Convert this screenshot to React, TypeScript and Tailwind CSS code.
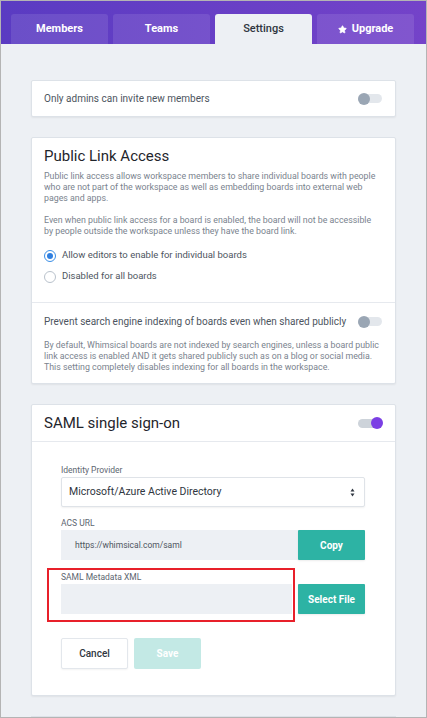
import { Star } from "lucide-react";

function Toggle({ on }: { on?: boolean }) {
	return (
		<div className={`relative h-[9px] w-[24px] rounded-full ${on ? "bg-[#cdd3da]" : "bg-[#e3e7ec]"}`}>
			<div
				className={`absolute top-1/2 h-[12px] w-[12px] -translate-y-1/2 rounded-full ${
					on ? "right-[-1px] bg-[#7b3fe4]" : "left-0 bg-[#9aa6b4]"
				}`}
			/>
		</div>
	);
}

function Radio({ checked, label }: { checked?: boolean; label: string }) {
	return (
		<div className="flex h-[15px] items-center gap-[6px]">
			<div
				className={`flex h-[12px] w-[12px] items-center justify-center rounded-full border ${
					checked ? "border-[#3a8ee6]" : "border-[#b9c2cc]"
				} bg-white`}
			>
				{checked && <div className="h-[6px] w-[6px] rounded-full bg-[#2f7fe0]" />}
			</div>
			<span className="text-[9.5px] text-[#4d5560]">{label}</span>
		</div>
	);
}

export default function App() {
	return (
		<div
			className="flex h-[718px] w-[427px] flex-col overflow-hidden border border-[#b4b4b4] bg-[#edf0f4]"
			style={{ fontFamily: "Roboto, 'Liberation Sans', sans-serif" }}
		>
			{/* Tabs header */}
			<div className="flex h-[43px] shrink-0 items-end gap-[5px] bg-gradient-to-r from-[#5a3bc2] to-[#7443c9] px-[10px]">
				<div className="flex h-[30px] w-[97px] items-center justify-center rounded-t-[3px] bg-white/10 text-[11px] font-bold text-white">
					Members
				</div>
				<div className="flex h-[30px] w-[97px] items-center justify-center rounded-t-[3px] bg-white/10 text-[11px] font-bold text-white">
					Teams
				</div>
				<div className="flex h-[30px] w-[97px] items-center justify-center rounded-t-[3px] bg-[#edf0f4] text-[11px] font-medium text-[#2f3640]">
					Settings
				</div>
				<div className="flex h-[30px] w-[97px] items-center justify-center gap-[5px] rounded-t-[3px] bg-white/10 text-[11px] font-bold text-white">
					<Star className="h-[9px] w-[9px]" fill="white" strokeWidth={2} />
					Upgrade
				</div>
			</div>

			<div className="flex flex-col gap-[20px] px-[30px] pt-[36px]">
				{/* Invite card */}
				<div className="flex h-[37px] items-center justify-between rounded-[2px] border border-[#dde2e8] bg-white pl-[12px] pr-[13px] shadow-[0_1px_2px_rgba(0,0,0,0.06)]">
					<span className="text-[10px] text-[#4d5560]">Only admins can invite new members</span>
					<Toggle />
				</div>

				{/* Public link access */}
				<div className="rounded-[2px] border border-[#dde2e8] bg-white shadow-[0_1px_2px_rgba(0,0,0,0.06)]">
					<div className="px-[12px] pb-[18px] pt-[8px]">
						<div className="text-[15px] leading-[20px] text-[#1f252c]">Public Link Access</div>
						<p className="mt-[5px] whitespace-nowrap text-[8.8px] leading-[11px] text-[#7a838e]">
							Public link access allows workspace members to share individual boards with people
							<br />
							who are not part of the workspace as well as embedding boards into external web
							<br />
							pages and apps.
						</p>
						<p className="mt-[11px] whitespace-nowrap text-[8.8px] leading-[11px] text-[#7a838e]">
							Even when public link access for a board is enabled, the board will not be accessible
							<br />
							by people outside the workspace unless they have the board link.
						</p>
						<div className="mt-[11px] flex flex-col gap-[6px]">
							<Radio checked label="Allow editors to enable for individual boards" />
							<Radio label="Disabled for all boards" />
						</div>
					</div>
					<div className="border-t border-[#e6e9ee] px-[12px] pb-[10px] pt-[11px]">
						<div className="flex h-[15px] items-center justify-between pr-[1px]">
							<span className="text-[10px] text-[#4d5560]">
								Prevent search engine indexing of boards even when shared publicly
							</span>
							<Toggle />
						</div>
						<p className="mt-[11px] whitespace-nowrap text-[8.8px] leading-[11px] text-[#7a838e]">
							By default, Whimsical boards are not indexed by search engines, unless a board public
							<br />
							link access is enabled AND it gets shared publicly such as on a blog or social media.
							<br />
							This setting completely disables indexing for all boards in the workspace.
						</p>
					</div>
				</div>

				{/* SAML */}
				<div className="rounded-[2px] border border-[#dde2e8] bg-white shadow-[0_1px_2px_rgba(0,0,0,0.06)]">
					<div className="flex h-[37px] items-center justify-between border-b border-[#e6e9ee] pl-[12px] pr-[13px]">
						<span className="text-[15px] text-[#1f252c]">SAML single sign-on</span>
						<Toggle on />
					</div>
					<div className="px-[29px] pb-[26px] pt-[22px]">
						<div className="text-[8.5px] leading-[12px] text-[#5d6670]">Identity Provider</div>
						<div className="mt-[1px] flex h-[30px] w-[304px] items-center justify-between rounded-[2px] border border-[#dfe3e8] bg-white pl-[7px] pr-[9px] shadow-[0_1px_2px_rgba(0,0,0,0.06)]">
							<span className="text-[10.5px] text-[#2f3640]">Microsoft/Azure Active Directory</span>
							<svg width="5" height="9" viewBox="0 0 5 9">
								<path d="M2.5 0.5 L4.5 3.5 L0.5 3.5 Z" fill="#2f3640" />
								<path d="M2.5 8.5 L4.5 5.5 L0.5 5.5 Z" fill="#2f3640" />
							</svg>
						</div>

						<div className="mt-[10px] text-[8.5px] leading-[12px] text-[#5d6670]">ACS URL</div>
						<div className="mt-[1px] flex h-[30px] w-[304px]">
							<div className="flex flex-1 items-center bg-[#edf0f4] pl-[14px] text-[8.5px] text-[#4d5560]">
								https://whimsical.com/saml
							</div>
							<div className="flex w-[67px] items-center justify-center rounded-[1px] bg-[#2db3a4] text-[10px] font-bold text-white shadow-[0_1px_2px_rgba(0,0,0,0.08)]">
								Copy
							</div>
						</div>

						<div className="relative mt-[11px]">
							<div className="pointer-events-none absolute left-[-14px] top-[-3px] h-[54px] w-[248px] border-2 border-[#e8202a]" />
							<div className="text-[8.5px] leading-[12px] text-[#5d6670]">SAML Metadata XML</div>
							<div className="mt-[1px] flex h-[30px] w-[304px] gap-[6px]">
								<div className="flex-1 bg-[#edf0f4]" />
								<div className="flex w-[67px] items-center justify-center rounded-[1px] bg-[#2db3a4] text-[10px] font-bold text-white shadow-[0_1px_2px_rgba(0,0,0,0.08)]">
									Select File
								</div>
							</div>
						</div>

						<div className="mt-[24px] flex gap-[6px]">
							<div className="flex h-[31px] w-[67px] items-center justify-center rounded-[2px] border border-[#e3e7ec] bg-white text-[10px] font-medium text-[#2f3640] shadow-[0_1px_2px_rgba(0,0,0,0.05)]">
								Cancel
							</div>
							<div className="flex h-[31px] w-[67px] items-center justify-center rounded-[2px] bg-[#c3e9e5] text-[10px] font-bold text-white">
								Save
							</div>
						</div>
					</div>
				</div>

				<div className="border-t border-[#dde2e8]" />
			</div>
		</div>
	);
}
